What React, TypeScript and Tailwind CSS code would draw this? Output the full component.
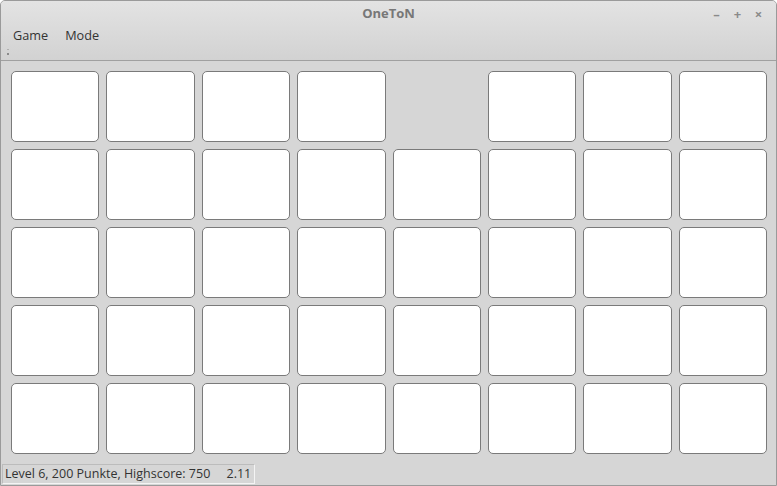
export default function App() {
  const rows = [
    [1, 1, 1, 1, 0, 1, 1, 1],
    [1, 1, 1, 1, 1, 1, 1, 1],
    [1, 1, 1, 1, 1, 1, 1, 1],
    [1, 1, 1, 1, 1, 1, 1, 1],
    [1, 1, 1, 1, 1, 1, 1, 1],
  ];

  return (
    <div
      className="w-[777px] h-[486px] flex flex-col bg-[#d6d6d6] border border-[#9a9a9a] rounded-t-[5px] overflow-hidden text-[#3c3c3c]"
      style={{ fontFamily: '"Open Sans", "Noto Sans", sans-serif' }}
    >
      {/* title + menu */}
      <div className="h-[60px] flex flex-col bg-gradient-to-b from-[#e3e3e3] to-[#d2d2d2] border-b border-[#a0a0a0]">
        <div className="relative h-[25px] flex items-center justify-center">
          <span className="text-[13px] font-bold text-[#777]">OneToN</span>
          <div className="absolute right-[12px] top-[4px] flex items-center gap-[10px] text-[#8a8a8a] text-[13px] font-bold">
            <span className="w-[11px] text-center">–</span>
            <span className="w-[11px] text-center">+</span>
            <span className="w-[11px] text-center">×</span>
          </div>
        </div>
        <div className="relative flex items-center h-[20px] pl-[12px] gap-[17px] text-[12.7px] text-[#333]">
          <span>Game</span>
          <span>Mode</span>
        </div>
        <div className="pl-[6px] pt-[3px] flex flex-col gap-[3px]">
          <div className="w-[2px] h-[1px] bg-[#b0b0b0]" />
          <div className="w-[2px] h-[2px] bg-[#8a8a8a]" />
        </div>
      </div>

      {/* board */}
      <div className="flex-1 pl-[10px] pt-[10px]">
        <div className="w-[756px] grid grid-cols-8 gap-x-[7px] gap-y-[7px]">
          {rows.flat().map((v, i) =>
            v ? (
              <div
                key={i}
                className="h-[71px] bg-white border border-[#7a7a7a] rounded-[5px]"
              />
            ) : (
              <div key={i} className="h-[71px]" />
            )
          )}
        </div>
      </div>

      {/* status */}
      <div className="h-[24px] pl-[1px] pb-[1px] flex items-end">
        <div className="w-[253px] h-[20px] border border-[#f4f4f4] border-t-[#bcbcbc] border-l-[#bcbcbc] flex items-center pl-[2px] text-[12.5px] text-[#333] whitespace-pre">
          Level 6, 200 Punkte, Highscore: 750     2.11
        </div>
      </div>
    </div>
  );
}
